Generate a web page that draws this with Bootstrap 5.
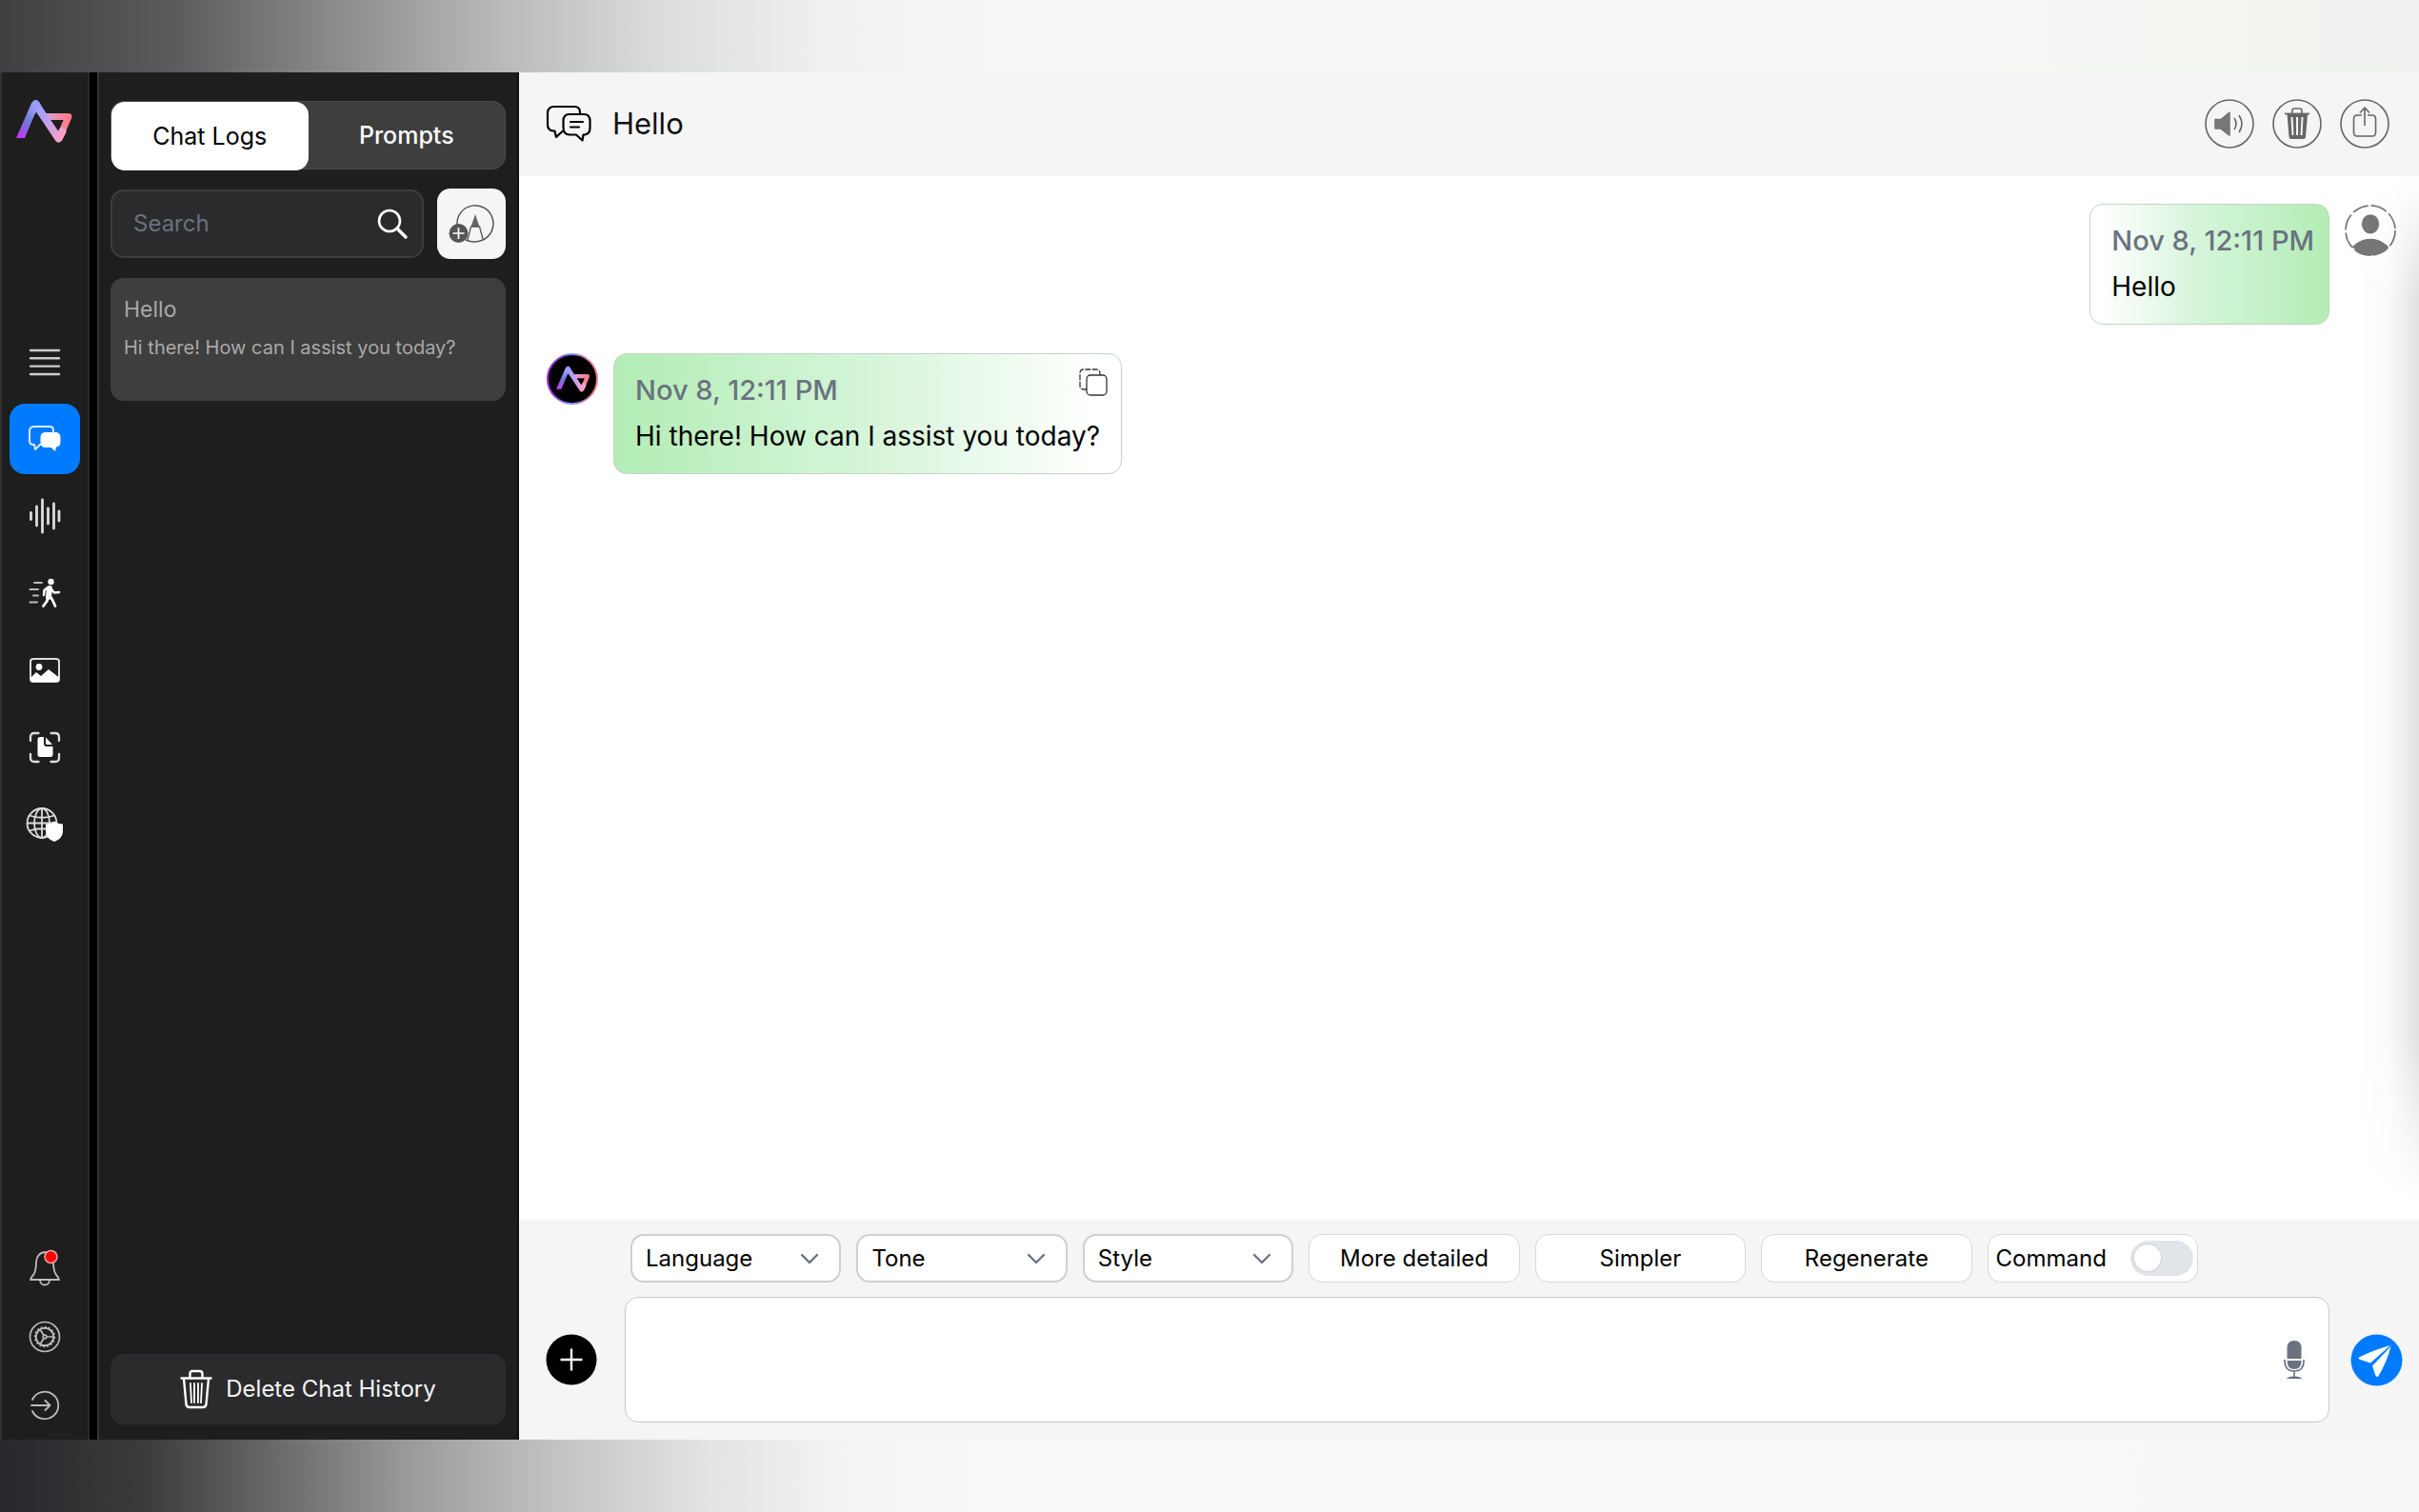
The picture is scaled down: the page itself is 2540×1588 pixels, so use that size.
<!DOCTYPE html>
<html lang="en">
<head>
<meta charset="utf-8">
<meta name="viewport" content="width=device-width, initial-scale=1">
<title>Chat</title>
<link href="https://cdn.jsdelivr.net/npm/bootstrap@5.3.0/dist/css/bootstrap.min.css" rel="stylesheet">
<style>
:root{--line:#c9cdd1;--soft:#f5f5f5;--panel:#1e1e1e;--blue:#007bff}
body{font-family:Inter,"Liberation Sans",sans-serif;font-size:24px;line-height:32px;color:#000}
svg{display:block;flex:none}
.strip{height:76px;flex:none}
.strip-top{background:linear-gradient(90deg,#404042 0,#5a5a5c 7%,#858585 13%,#b5b5b5 20%,#dadbdb 27%,#eff0ef 34%,#f7f7f7 42%,#f8f8f8 80%,#f1f4ef 93%,#eff0ef 100%)}
.strip-bottom{background:linear-gradient(90deg,#28272d 0,#3b3b3b 6%,#666 11%,#9b9b9b 17%,#c3c3c3 23%,#e2e2e2 29%,#f4f4f4 35%,#fafafa 42%,#f9f9f9 85%,#f6f6f6 100%)}
.rail{width:94px;background:var(--panel);border-left:2px solid #333;border-right:2px solid #2b2b2b;flex:none;color:#ddd;padding:28px 0 0}
.rail-btn{width:74px;height:74px;border-radius:16px;color:inherit;padding:0;border:0;background:none}
.rail-btn.on{background:var(--blue);color:#fff}
.rail-nav{gap:7px;margin-top:191px}
.rail-foot .rail-btn{height:72px}
.side{width:443px;background:var(--panel);border-left:2px solid #333;border-right:2px solid #111;flex:none;padding:30px 12px 16px}
.tabs{background:#3e3e3e;border:1px solid #4c4c4c;border-radius:14px;height:72px}
.tab-btn{flex:1 1 0;border:0;background:none;color:#fff;border-radius:14px;font-weight:500;font-size:25px}
.tab-btn.on{background:#fff;color:#000;height:72px;font-weight:400}
.find-row{gap:14px;margin-top:20px}
.find{height:72px;border:2px solid #3d3d3d;background:#2b2b2d;border-radius:14px;padding:0 14px 0 20px}
.find input{background:none;border:0;outline:0;color:#ddd;width:100%;min-width:0}
.find input::placeholder{color:#6b7080;opacity:1}
.new-btn{width:72px;height:74px;border-radius:14px;background:#f5f5f5;border:0;padding:0;flex:none}
.log{background:#3e3e3e;border-radius:14px;height:129px;color:#a9a9a9;padding:17px 14px;margin-top:20px;text-decoration:none;font-size:23px}
.log-sub{font-size:20px;margin-top:8px}
.wipe{height:74px;border-radius:14px;background:#2b2b2d;border:0;color:#f5f5f5;gap:14px}
.head{height:109px;background:var(--soft);padding:0 31px 2px 28px}
.head h1{font-size:31px;line-height:40px;font-weight:400;color:#111}
.head-title{gap:22px}
.head-tools{gap:19px}
.ring-btn{width:52px;height:52px;border:0;background:none;padding:0}
.feed{background:#fff;padding:29px 24px 0 29px}
.feed::after{content:"";position:absolute;top:0;right:0;bottom:0;width:70px;background:linear-gradient(90deg,rgba(0,0,0,0),rgba(0,0,0,.02) 55%,rgba(0,0,0,.12));-webkit-mask-image:linear-gradient(#0000,#000 12%,#000 82%,#0000 98%);pointer-events:none}
.msg-own{margin-bottom:30px}
.bubble{border:1px solid #c5d2c8;border-radius:14px;height:127px;line-height:48px;font-size:28px;padding:14px 22px 0}
.bubble.me{background:linear-gradient(90deg,#fff 5%,#d5f5d9 45%,#b3edb5);padding-right:15px}
.bubble.ai{background:linear-gradient(90deg,#b3edb5,#d5f5d9 50%,#fff 95%)}
.when{color:#6b7280;font-weight:500;font-size:29px}
.copy-btn{position:absolute;top:14px;right:13px;border:0;background:none;padding:0}
.foot{background:var(--soft);height:230px;padding:14px 17px 0 28px}
.opts{display:grid;grid-template-columns:repeat(7,minmax(0,1fr));gap:16px;max-width:1652px;padding-left:6px}
.opt{height:51px;border:1px solid #d5d7d9;border-radius:14px;background-color:#fff;color:#000;padding:0;font-size:24px}
select.opt{appearance:none;border:2px solid #cdcfd1;padding:0 14px;background-image:url("data:image/svg+xml,%3Csvg xmlns='http://www.w3.org/2000/svg' width='20' height='12' viewBox='0 0 20 12'%3E%3Cpath d='M2 2l8 8 8-8' fill='none' stroke='%236b7280' stroke-width='2.4' stroke-linecap='round' stroke-linejoin='round'/%3E%3C/svg%3E");background-repeat:no-repeat;background-position:right 21px center}
.switch-in{appearance:none;width:66px;height:37px;border-radius:19px;background:#e1e4e8;position:relative;margin:0}
.switch-in::before{content:"";position:absolute;left:4px;top:4px;width:28px;height:28px;border-radius:50%;background:#fff;box-shadow:0 0 0 1px #cfd2d6}
.box{height:132px;border:1px solid #c6c9cc;border-radius:14px;background:#fff;margin-top:15px;padding-right:25px}
.box textarea{border:0;outline:0;resize:none;background:none;height:100%;padding:20px}
.add-slot{width:83px;flex:none;padding-top:105px}
.send-slot{flex:none;padding:105px 0 0 22px}
.round{border:0;background:none;padding:0}
</style>
<script src="https://cdn.jsdelivr.net/npm/bootstrap@5.3.0/dist/js/bootstrap.bundle.min.js"></script>
</head>
<body class="vh-100 d-flex flex-column overflow-hidden bg-black">
<svg width="0" height="0" class="position-absolute" aria-hidden="true">
  <defs>
    <linearGradient id="ga" x1="0" y1="1" x2="0.6" y2="0"><stop offset="0" stop-color="#d02cff"/><stop offset=".5" stop-color="#6f78d8"/><stop offset="1" stop-color="#a9a4ff"/></linearGradient>
    <linearGradient id="gb" x1="0" y1="0" x2="1" y2="1"><stop offset="0" stop-color="#9a9cff"/><stop offset=".5" stop-color="#c0a3ef"/><stop offset="1" stop-color="#ff9fc0"/></linearGradient>
    <linearGradient id="gc" x1="0" y1="0" x2="1" y2="0"><stop offset="0" stop-color="#d9a0d8"/><stop offset="1" stop-color="#ff7a86"/></linearGradient>
    <linearGradient id="gr"><stop offset="0" stop-color="#a020f0"/><stop offset=".45" stop-color="#7f8cff"/><stop offset="1" stop-color="#ff7a86"/></linearGradient>
    <symbol id="logo" viewBox="0 0 60 48">
      <path d="M32 18.500H55L45 41.500" fill="none" stroke="url(#gc)" stroke-width="7" stroke-linejoin="round"/>
      <path d="M0 41L16 4.500Q20-1.500 24 3L26 6 19 17 9 41Z" fill="url(#ga)"/>
      <path d="M20.500 5.500L44.500 41.500L48.500 34" fill="none" stroke="url(#gb)" stroke-width="8" stroke-linejoin="round" stroke-linecap="round"/>
    </symbol>
  </defs>
</svg>
<div class="strip strip-top"></div>
<div class="d-flex flex-grow-1 overflow-hidden">
  <nav class="rail d-flex flex-column align-items-center" aria-label="Main">
    <a href="#" aria-label="Home"><svg width="60" height="48"><use href="#logo"/></svg></a>
    <div class="rail-nav d-flex flex-column w-100 align-items-center">
      <button class="rail-btn d-flex align-items-center justify-content-center" aria-label="Menu"><svg width="34" height="30" viewBox="0 0 34 30" stroke="#ccc" stroke-width="2.400" stroke-linecap="round"><path d="M2 3H32M2 11.300H32M2 19.600H32M2 28H32"/></svg></button>
      <button class="rail-btn on d-flex align-items-center justify-content-center" aria-label="Chats"><svg width="36" height="30" viewBox="0 0 36 30"><path d="M27 8V6Q27 2 23 2H7Q2 2 2 7V17Q2 21 6 21H7L8 26 13 21H14" fill="none" stroke="#dcebff" stroke-width="2" stroke-linejoin="round"/><path d="M19 8H29Q34.500 8 34.500 13.500V18Q34.500 23 30 23.500L29 28 24.500 24H19Q13.500 24 13.500 18.500V13.500Q13.500 8 19 8Z" fill="#fff"/></svg></button>
      <button class="rail-btn d-flex align-items-center justify-content-center" aria-label="Voice"><svg width="34" height="38" viewBox="0 0 34 38" stroke="currentColor" stroke-width="2.800" stroke-linecap="round"><path d="M2.500 15.500V22.500M8.500 9V29M14.500 2V36M20.500 11V27M26.500 6V32M32 14V24"/></svg></button>
      <button class="rail-btn d-flex align-items-center justify-content-center" aria-label="Actions"><svg width="34" height="32" viewBox="0 0 34 32" fill="none" stroke-linecap="round" stroke-linejoin="round"><path d="M6 5H14M1.500 12H10M5 18.500H10M1.500 25.500H9" stroke="#bbb" stroke-width="2"/><circle cx="23.500" cy="4" r="3.200" fill="#fff"/><path d="M22 11L21 20" stroke="#fff" stroke-width="6"/><path d="M20 10L16.500 13 16 18M24 12L27 15.500 32 15" stroke="#fff" stroke-width="2.500"/><path d="M20 20L19.500 24 15.500 29.500M22.500 19L25 23 28 29.500" stroke="#fff" stroke-width="2.800"/></svg></button>
      <button class="rail-btn d-flex align-items-center justify-content-center" aria-label="Images"><svg width="34" height="28" viewBox="0 0 34 28"><rect x="2" y="2" width="30" height="24" rx="3" fill="none" stroke="#ddd" stroke-width="2"/><circle cx="11" cy="10.500" r="3.400" fill="#fff"/><path d="M2 22L8 16 13 20 21 13 32 21.500V24Q32 26 30 26H4Q2 26 2 24Z" fill="#fff"/></svg></button>
      <button class="rail-btn d-flex align-items-center justify-content-center" aria-label="Documents"><svg width="34" height="34" viewBox="0 0 34 34"><path d="M2 10V6Q2 2 6 2H10.500M23.500 2H28Q32 2 32 6V10M32 24V28Q32 32 28 32H23.500M10.500 32H6Q2 32 2 28V24" fill="none" stroke="#ddd" stroke-width="2.300" stroke-linecap="round"/><path d="M12 6H16V13Q16 16 19 16H25.500V24.500Q25.500 27 23 27H12Q9.500 27 9.500 24.500V8.500Q9.500 6 12 6ZM18 6.500L25 14H19.500Q18 14 18 12.500Z" fill="#fff"/></svg></button>
      <button class="rail-btn d-flex align-items-center justify-content-center" aria-label="Web"><svg width="40" height="38" viewBox="0 0 40 38"><g fill="none" stroke="#ddd" stroke-width="1.800"><circle cx="17" cy="17.500" r="15.500"/><ellipse cx="17" cy="17.500" rx="8" ry="15.500"/><path d="M17 2V33M1.500 17.500H32.500M4 9.500Q17 14 30 9.500M4 25.500Q17 21 30 25.500"/></g><path d="M30 15.500Q34 18.500 39 18.500V27Q38 34.500 30 37 22 34.500 21 27V18.500Q26 18.500 30 15.500Z" fill="#fff"/></svg></button>
    </div>
    <div class="rail-foot d-flex flex-column w-100 align-items-center mt-auto">
      <button class="rail-btn d-flex align-items-center justify-content-center" aria-label="Notifications"><svg width="34" height="40" viewBox="0 0 34 40"><path d="M17 3Q9 4 8 13 8 23 5 27 2 30 2 32H32Q32 30 29 27 26 23 26 13 25 4 17 3ZM12 32.500Q12.500 37.500 17 37.500 21.500 37.500 22 32.500" fill="none" stroke="#bbb" stroke-width="1.800" stroke-linejoin="round"/><circle cx="23.500" cy="8" r="6.500" fill="#f00" stroke="#f0a0a0" stroke-width="1.500"/></svg></button>
      <button class="rail-btn d-flex align-items-center justify-content-center" aria-label="Settings"><svg width="34" height="34" viewBox="0 0 34 34" fill="none" stroke="#bbb" stroke-width="1.700"><circle cx="17" cy="17" r="15.500"/><circle cx="17" cy="17" r="9.300" stroke-width="2" /><circle cx="17" cy="17" r="10.300" stroke-dasharray="1.800 2.200"/><circle cx="17" cy="17" r="1.800"/><path d="M19 17H26M16 15.500L12 9M16 18.500L12 25"/></svg></button>
      <button class="rail-btn d-flex align-items-center justify-content-center" aria-label="Log out"><svg width="32" height="32" viewBox="0 0 32 32" fill="none" stroke="#bbb" stroke-width="1.800" stroke-linecap="round" stroke-linejoin="round"><path d="M3 10A14.300 14.300 0 1 1 3 22M2 16H21M16.500 11L21.500 16 16.500 21"/></svg></button>
    </div>
  </nav>
  <aside class="side d-flex flex-column ms-2">
    <div class="tabs d-flex" role="tablist">
      <button class="tab-btn on" role="tab" aria-selected="true">Chat Logs</button>
      <button class="tab-btn" role="tab" aria-selected="false">Prompts</button>
    </div>
    <div class="find-row d-flex align-items-center">
      <label class="find d-flex align-items-center flex-grow-1">
        <input type="search" placeholder="Search" aria-label="Search">
        <svg width="34" height="34" viewBox="0 0 34 34" fill="none" stroke="#fff" stroke-width="2.600"><circle cx="14" cy="14" r="11"/><path d="M22 22L31 31" stroke-width="3.500" stroke-linecap="round"/></svg>
      </label>
      <button class="new-btn d-flex align-items-center justify-content-center" aria-label="New chat"><svg width="48" height="42" viewBox="0 0 48 42"><path d="M9 22A19 19 0 1 1 36 38M19 38.500H20" fill="none" stroke="#555" stroke-width="1.500"/><path d="M18 38Q27 42 36 38" fill="none" stroke="#555" stroke-width="1.500"/><path d="M28 11L32.500 24H23.500Z" fill="#666"/><path d="M23.500 24L20 38M32.500 24L36 37M23.500 24H32.500" fill="none" stroke="#555" stroke-width="1.300"/><circle cx="10.500" cy="31" r="10" fill="#555"/><path d="M10.500 25V37M4.500 31H16.500" stroke="#fff" stroke-width="1.700"/></svg></button>
    </div>
    <a href="#" class="log d-block">Hello<span class="log-sub d-block">Hi there! How can I assist you today?</span></a>
    <button class="wipe d-flex align-items-center justify-content-center mt-auto"><svg width="34" height="42" viewBox="0 0 34 42" fill="none" stroke="#fff" stroke-width="2.400" stroke-linecap="round" stroke-linejoin="round"><path d="M1.500 9.500H32.500M10.500 9V5Q10.500 2 13.500 2H20.500Q23.500 2 23.500 5V9M4 10L6.500 37Q7 40 10 40H24Q27 40 27.500 37L30 10"/><path d="M11 15L12 35M15 15V35M19 15V35M23 15L22 35" stroke-width="1.800"/></svg>Delete Chat History</button>
  </aside>
  <main class="d-flex flex-column flex-grow-1">
    <header class="head d-flex align-items-center justify-content-between">
      <div class="head-title d-flex align-items-center"><svg width="48" height="40" viewBox="0 0 48 40" fill="none" stroke="#000" stroke-width="2.200" stroke-linejoin="round" stroke-linecap="round"><path d="M36 9V8Q36 2 30 2H9Q2 2 2 9V21Q2 27 8 27.500H9.500L11 34 17.500 28"/><path d="M25 10H40Q46.500 10 46.500 17V24Q46.500 31 41 31.500H39.500L38.500 37.500 32 31.500H25Q18.500 31.500 18.500 24V17Q18.500 10 25 10Z"/><path d="M26 18H39M26 23.500H35"/></svg><h1 class="m-0">Hello</h1></div>
      <div class="head-tools d-flex">
        <button class="ring-btn" aria-label="Sound"><svg width="52" height="52" viewBox="0 0 52 52" fill="none" stroke="#666" stroke-width="1.600"><circle cx="26" cy="26" r="25"/><path d="M11 21.500H17L26 14V38L17 31H11Z" fill="#777" stroke="#777" stroke-linejoin="round"/><path d="M31 20Q35 26 31 32M36 17Q42 26 36 35" stroke-width="1.600"/></svg></button>
        <button class="ring-btn" aria-label="Delete"><svg width="52" height="52" viewBox="0 0 52 52" fill="none" stroke="#666" stroke-width="1.600"><circle cx="26" cy="26" r="25"/><path d="M21 15V12Q21 10 23 10H29Q31 10 31 12V15"/><path d="M13 15.500H39" stroke-width="1.800"/><path d="M15.500 16H37L35 39.500Q35 42 32.500 42H20Q17.500 42 17.500 39.500Z" fill="#666" stroke="none"/><path d="M20.500 19L21.500 38M26 19V38M31.500 19L30.500 38" stroke="#f5f5f5" stroke-width="2"/></svg></button>
        <button class="ring-btn" aria-label="Share"><svg width="52" height="52" viewBox="0 0 52 52" fill="none" stroke="#666" stroke-width="1.600" stroke-linejoin="round"><circle cx="26" cy="26" r="25"/><path d="M23 17H18Q14.500 17 14.500 21V35Q14.500 39 18 39H34Q37.500 39 37.500 35V21Q37.500 17 34 17H29M26 28V9M21 14.500L26 9 31 14.500"/></svg></button>
      </div>
    </header>
    <section class="feed flex-grow-1 position-relative" aria-label="Conversation">
      <div class="msg-own d-flex justify-content-end">
        <div class="bubble me"><div class="when">Nov 8, 12:11 PM</div><div>Hello</div></div>
        <svg class="ms-3" width="54" height="56" viewBox="0 0 56 56"><circle cx="28" cy="28" r="27" fill="none" stroke="#777" stroke-width="1.800" stroke-dasharray="18 3.200"/><ellipse cx="28" cy="21" rx="9.500" ry="10.500" fill="#777"/><path d="M8 46Q17 37 28 37 39 37 48 46 39 55.500 28 55.500 17 55.500 8 46Z" fill="#777"/></svg>
      </div>
      <div class="d-flex">
        <svg class="me-3" width="54" height="54" viewBox="0 0 54 54"><circle cx="27" cy="27" r="26" fill="#000" stroke="url(#gr)" stroke-width="2"/><use href="#logo" x="10" y="13" width="36" height="29"/></svg>
        <div class="bubble ai position-relative"><div class="when">Nov 8, 12:11 PM</div><div>Hi there! How can I assist you today?</div>
          <button class="copy-btn" aria-label="Copy"><svg width="32" height="32" viewBox="0 0 32 32" fill="none" stroke="#333" stroke-width="1.300"><rect x="9" y="8" width="21" height="21" rx="4" fill="#fff"/><path d="M9 23H6Q2 23 2 19V6Q2 2 6 2H19Q23 2 23 6V8" stroke-dasharray="6 1.500"/></svg></button>
        </div>
      </div>
    </section>
    <footer class="foot d-flex">
      <div class="add-slot"><button class="round" aria-label="Add"><svg width="54" height="54" viewBox="0 0 54 54"><circle cx="27" cy="27" r="26.500"/><path d="M27 15.500V38.500M15.500 27H38.500" stroke="#fff" stroke-width="2.400"/></svg></button></div>
      <div class="flex-grow-1">
        <div class="opts">
          <select class="opt" aria-label="Language"><option>Language</option></select>
          <select class="opt" aria-label="Tone"><option>Tone</option></select>
          <select class="opt" aria-label="Style"><option>Style</option></select>
          <button class="opt">More detailed</button>
          <button class="opt">Simpler</button>
          <button class="opt">Regenerate</button>
          <label class="opt d-flex align-items-center justify-content-between ps-2 pe-1" for="cmd">Command<input class="switch-in" type="checkbox" role="switch" id="cmd"></label>
        </div>
        <div class="box d-flex align-items-center">
          <textarea class="flex-grow-1" aria-label="Message"></textarea>
          <button class="round" aria-label="Dictate"><svg width="22" height="42" viewBox="0 0 22 42"><path d="M3.500 20V9Q3.500 1 11 1 18.500 1 18.500 9V20ZM3.500 22H18.500Q18.500 31 11 31 3.500 31 3.500 22Z" fill="#6b7280"/><path d="M1 21Q0.500 33 11 33 21.500 33 21 21M11 33V39" fill="none" stroke="#6b7280" stroke-width="1.600"/><path d="M3 41Q4 38.500 11 38.500 18 38.500 19 41Z" fill="#6b7280"/></svg></button>
        </div>
      </div>
      <div class="send-slot"><button class="round" aria-label="Send"><svg width="55" height="55" viewBox="0 0 55 55"><circle cx="27.500" cy="27.500" r="27" fill="#007bff"/><path d="M42 12Q24 17 9 24.500 8 25.500 9 26.500L21 30.500ZM42.500 13L23 33.500 26.500 44Q28 46 29.500 44 38 30 42.500 13Z" fill="#fff"/></svg></button></div>
    </footer>
  </main>
</div>
<div class="strip strip-bottom"></div>
</body>
</html>
